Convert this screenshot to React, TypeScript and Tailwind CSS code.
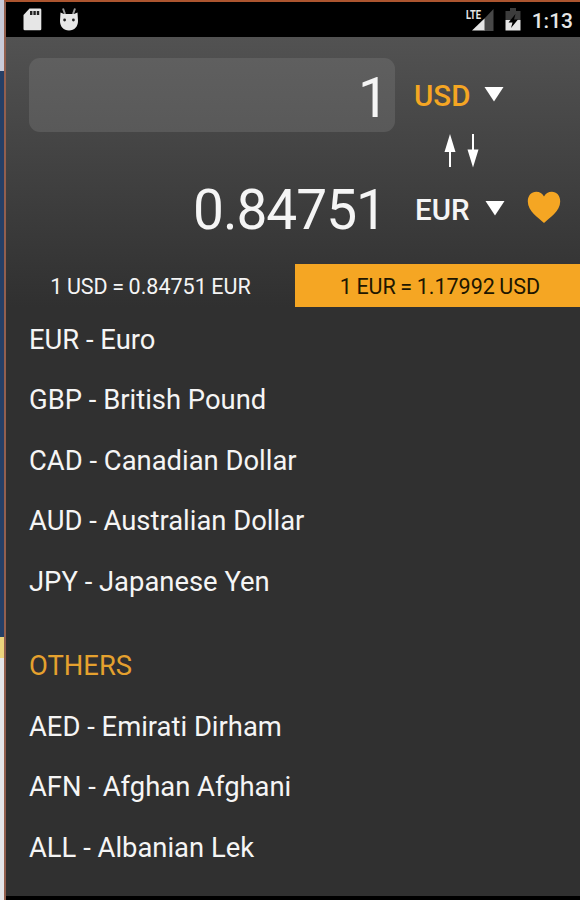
const popular = ['EUR - Euro', 'GBP - British Pound', 'CAD - Canadian Dollar', 'AUD - Australian Dollar', 'JPY - Japanese Yen']
const others = ['AED - Emirati Dirham', 'AFN - Afghan Afghani', 'ALL - Albanian Lek']

function StatusBar() {
  return (
    <div className="h-[35px] shrink-0 bg-black flex items-start pl-[17px] text-[#e6e6e6]">
      <svg className="mt-[6px]" width="19" height="23" viewBox="0 0 19 23">
        <path d="M6.5 0.5H17a1.3 1.3 0 0 1 1.3 1.3V21a1.3 1.3 0 0 1-1.3 1.3H1.8A1.3 1.3 0 0 1 .5 21V7z" fill="currentColor" />
        <path d="M7 3h2.400v4H7zM10.400 3h2.400v4h-2.400zM13.800 3h2.400v4h-2.400z" fill="#222" />
      </svg>
      <svg className="mt-[5px] ml-[17px]" width="20" height="24" viewBox="0 0 20 24">
        <path d="M4 1.500l2 5.500M16 1.500l-2 5.500" stroke="#999" strokeWidth="2" />
        <path d="M1.500 5.500L5 7h10l3.500-1.500L19 14c0 5.500-3.500 9.500-9 9.500S1 19.500 1 14z" fill="currentColor" />
        <circle cx="5.600" cy="13" r="1.400" fill="#222" />
        <circle cx="14.400" cy="13" r="1.400" fill="#222" />
      </svg>
      <div className="ml-auto flex items-start">
        <svg className="mt-[5px]" width="28" height="25" viewBox="0 0 28 25">
          <path d="M27.500 2v22H18V12z" fill="#484848" />
          <path d="M18.500 11.500V23.500H6z" fill="currentColor" />
          <text x="0" y="12" fill="currentColor" fontFamily="Roboto, sans-serif" fontSize="13.500" fontWeight="700" textLength="15" lengthAdjust="spacingAndGlyphs">LTE</text>
        </svg>
        <svg className="mt-[6px] ml-[11px]" width="16" height="23" viewBox="0 0 16 23">
          <path d="M0.500 3H5V0h6v3h4.500v9h-15z" fill="#3c3c3c" />
          <path d="M0.500 12h15v10.500H0.500z" fill="currentColor" />
          <path d="M10.500 6l-7 8.500h4L6 20l7-8.500H9z" fill="#000" />
        </svg>
        <span className="mt-[5px] ml-[11px] mr-[7px] text-[21px] leading-[28px] font-medium">1:13</span>
      </div>
    </div>
  )
}

function Caret() {
  return (
    <svg className="ml-[14px] -mt-[5px]" width="20" height="16" viewBox="0 0 20 16">
      <path d="M0.500 1h19L10 15.500z" fill="#fff" />
    </svg>
  )
}

function Converter() {
  return (
    <div className="h-[227px] shrink-0">
      <div className="flex pt-[21px] pl-[23px]">
        <div className="w-[366px] h-[74px] rounded-[11px] bg-gradient-to-b from-[#5f5f5f] to-[#595959] flex items-center justify-end pr-[6px] pt-[6px]">
          <span className="text-[55px] leading-none">1</span>
        </div>
        <div className="flex items-center pl-[19px] pt-[2px]">
          <span className="w-[56px] text-[29.500px] font-medium text-[#f5a623]">USD</span>
          <Caret />
        </div>
      </div>
      <div className="h-[42px] pl-[437px] pt-[2px]">
        <svg width="38" height="36" viewBox="0 0 38 36">
          <path d="M7 0l5.500 18H8v15H6V18H1.500zM30 33.500L24.500 15.500H29V0h2v15.500h4.500z" fill="#fff" />
        </svg>
      </div>
      <div className="flex items-center h-[72px]">
        <span className="w-[380px] text-right text-[55px] leading-none tracking-[-1px]">0.84751</span>
        <span className="ml-[29px] w-[56px] text-[29.500px] font-medium">EUR</span>
        <Caret />
        <svg className="ml-[22px] -mt-[5px]" width="34" height="33" viewBox="0 0 34 33">
          <path d="M17 32C11.500 26.500.800 20.500.800 10.500.800 4.500 4.500.800 9.200.800c3.500 0 6.300 1.700 7.800 4.700C18.500 2.500 21.300.800 24.800.800c4.700 0 8.400 3.700 8.400 9.700C33.200 20.500 22.500 26.500 17 32z" fill="#f5a623" />
        </svg>
      </div>
    </div>
  )
}

function Row({ label }: { label: string }) {
  return <li className="h-[60.500px] flex items-center">{label}</li>
}

export default function App() {
  return (
    <div className="w-[580px] h-[900px] overflow-hidden flex bg-[#303030] text-[#f5f5f5] font-[Roboto,sans-serif]">
      <div className="w-[4px] shrink-0 flex flex-col">
        <div className="h-[71px] bg-[#c9cbd9]" />
        <div className="h-[566px] bg-[#263f66]" />
        <div className="h-[21px] bg-[#ecd47d]" />
        <div className="grow bg-[#e4e5e9]" />
      </div>
      <div className="grow flex flex-col border-l-2 border-t-2 border-l-[#925f4e] border-t-[#ac552f]">
        <StatusBar />
        <div className="flex flex-col bg-[linear-gradient(to_bottom,#525252_0px,#303030_270px)] h-[859px]">
          <Converter />
          <div className="flex h-[43px] shrink-0 text-[21.500px] [word-spacing:-0.8px]">
            <div className="w-[289px] flex items-center justify-center pt-[3px]">1 USD = 0.84751 EUR</div>
            <div className="grow flex items-center justify-center pl-[5px] pt-[3px] bg-[#f5a623] text-[#201600]">1 EUR = 1.17992 USD</div>
          </div>
          <ul className="pl-[23px] pt-[3px] text-[27.400px]">
            {popular.map(c => <Row key={c} label={c} />)}
            <li className="h-[60.500px] mt-[24px] flex items-center text-[#e5a12e]">OTHERS</li>
            {others.map(c => <Row key={c} label={c} />)}
          </ul>
        </div>
        <div className="grow bg-black" />
      </div>
    </div>
  )
}
